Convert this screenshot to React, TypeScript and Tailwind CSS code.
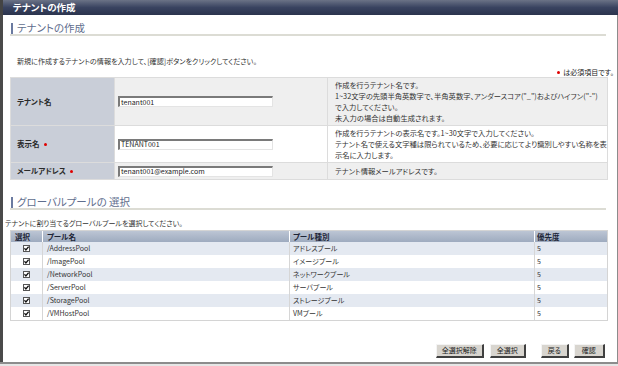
import React from "react";

const pools = [
  { name: "/AddressPool", type: "アドレスプール" },
  { name: "/ImagePool", type: "イメージプール" },
  { name: "/NetworkPool", type: "ネットワークプール" },
  { name: "/ServerPool", type: "サーバプール" },
  { name: "/StoragePool", type: "ストレージプール" },
  { name: "/VMHostPool", type: "VMプール" },
];

function Dot() {
  return <span className="inline-block w-[3px] h-[3px] rounded-full bg-[#e00000] ml-[4px] align-middle" />;
}

function Check() {
  return (
    <span className="w-[7px] h-[7px] border border-[#555] bg-white flex items-center justify-center">
      <svg width="5" height="5" viewBox="0 0 5 5">
        <path d="M0.4 2.3 L1.9 3.9 L4.6 0.7" stroke="#111" strokeWidth="1.3" fill="none" />
      </svg>
    </span>
  );
}

function Heading({ children }: { children: React.ReactNode }) {
  return (
    <div className="flex items-center h-[14px] border-b-2 border-[#dcdcd4] mr-[2px]">
      <span className="w-[2px] h-[11px] bg-[#6a7aa0] ml-px mr-[4px]" />
      <span className="text-[10.5px] leading-[12px] text-[#5f6e8e]">{children}</span>
    </div>
  );
}

function Input({ value }: { value: string }) {
  return (
    <div className="w-[155px] h-[11px] bg-white border-t-2 border-l-2 border-[#7a7a7a] border-r border-b border-r-[#e4e4e4] border-b-[#e4e4e4] flex items-center pl-[1px] text-[7px] text-[#222] leading-none">
      {value}
    </div>
  );
}

function Btn({ label, w }: { label: string; w: string }) {
  return (
    <div className={`${w} h-[14px] bg-[#d8d5cf] border-t border-l border-t-[#f4f4f4] border-l-[#f4f4f4] border-r-2 border-b-2 border-r-[#404040] border-b-[#404040] flex items-center justify-center text-[7px] leading-none text-[#222]`}>
      {label}
    </div>
  );
}

export default function App() {
  return (
    <div className="w-[618px] h-[366px] flex flex-col bg-white overflow-hidden font-['Noto_Sans_CJK_JP',sans-serif] [font-feature-settings:'palt']">
      <div className="h-[15px] shrink-0 bg-linear-to-b from-[#6b7386] via-[#394360] to-[#2b344d] flex items-center pl-[10px] border-l-[3px] border-[#444]">
        <span className="text-white font-bold text-[9.5px] leading-none">テナントの作成</span>
      </div>
      <div className="flex flex-1 min-h-0">
        <div className="w-[3px] bg-[#4a4a4a] shrink-0" />
        <div className="flex-1 flex flex-col pl-[7px] pr-[9px]">
          <div className="mt-[7px]">
            <Heading>テナントの作成</Heading>
          </div>
          <div className="mt-[20px] pl-[7px] text-[7.1px] leading-[10px] text-[#333]">
            新規に作成するテナントの情報を入力して、[確認]ボタンをクリックしてください。
          </div>
          <div className="flex justify-end items-center -mr-[6px] mt-[2px] h-[9px] text-[7px] text-[#222] leading-none">
            <span className="w-[3px] h-[3px] rounded-full bg-[#e00000] mr-[3px]" />
            は必須項目です。
          </div>
          <div className="mt-0 grid grid-cols-[103px_212px_1fr] grid-rows-[47px_36px_16px] gap-px bg-[#dcdcdc] border border-[#dcdcdc] text-[7.3px] text-[#333] whitespace-nowrap">
            <div className="bg-[#c9ced8] flex items-center pl-[6px] font-bold text-[7.5px] text-[#2a2a2a]">テナント名</div>
            <div className="bg-[#efefef] flex items-center pl-[3px]"><Input value="tenant001" /></div>
            <div className="bg-[#efefef] flex flex-col justify-center pl-[7px] leading-[11px]">
              <span>作成を行うテナント名です。</span>
              <span>1~32文字の先頭半角英数字で、半角英数字、アンダースコア("_")およびハイフン("-")</span>
              <span>で入力してください。</span>
              <span>未入力の場合は自動生成されます。</span>
            </div>
            <div className="bg-[#c9ced8] flex items-center pl-[6px] font-bold text-[7.5px] text-[#2a2a2a]">表示名<Dot /></div>
            <div className="bg-white flex items-center pl-[3px]"><Input value="TENANT001" /></div>
            <div className="bg-white flex flex-col justify-center pl-[7px] leading-[11px]">
              <span>作成を行うテナントの表示名です。1~30文字で入力してください。</span>
              <span>テナント名で使える文字種は限られているため、必要に応じてより識別しやすい名称を表</span>
              <span>示名に入力します。</span>
            </div>
            <div className="bg-[#c9ced8] flex items-center pl-[6px] font-bold text-[7.5px] text-[#2a2a2a]">メールアドレス<Dot /></div>
            <div className="bg-[#efefef] flex items-center pl-[3px]"><Input value="tenant001@example.com" /></div>
            <div className="bg-[#efefef] flex items-center pl-[7px]">テナント情報メールアドレスです。</div>
          </div>

          <div className="mt-[16px]">
            <Heading>グローバルプールの 選択</Heading>
          </div>
          <div className="mt-[8px] -ml-[5px] text-[7px] leading-[10px] text-[#333]">
            テナントに割り当てるグローバルプールを選択してください。
          </div>
          <div className="mt-[2px] border border-[#d4d4d4] text-[7px] text-[#333]">
            <div className="grid grid-cols-[32px_247px_245px_1fr] h-[11px] bg-linear-to-b from-[#bcc5d4] to-[#9eabbf] font-bold text-[7.5px] text-[#1c2436]">
              <div className="flex items-center pl-[4px] border-r border-white">選択</div>
              <div className="flex items-center pl-[4px] border-r border-white">プール名</div>
              <div className="flex items-center pl-[3px] border-r border-white">プール種別</div>
              <div className="flex items-center pl-[2px]">優先度</div>
            </div>
            {pools.map((p, i) => (
              <div
                key={p.name}
                className={`grid grid-cols-[32px_247px_245px_1fr] h-[13px] ${i % 2 === 0 ? "bg-[#e4e9f1]" : "bg-white"}`}
              >
                <div className="flex items-center justify-center border-r border-[#d6d6d6]"><Check /></div>
                <div className="flex items-center pl-[4px] border-r border-[#d6d6d6]">{p.name}</div>
                <div className="flex items-center pl-[3px] border-r border-[#d6d6d6]">{p.type}</div>
                <div className="flex items-center pl-[2px]">5</div>
              </div>
            ))}
          </div>

          <div className="mt-auto mb-[4px] flex justify-end pr-[3px]">
            <Btn label="全選択解除" w="w-[48px]" />
            <div className="w-[6px]" />
            <Btn label="全選択" w="w-[36px]" />
            <div className="w-[15px]" />
            <Btn label="戻る" w="w-[28px]" />
            <div className="w-[5px]" />
            <Btn label="確認" w="w-[31px]" />
          </div>
        </div>
        <div className="w-[2px] bg-[#8c8c8c] shrink-0" />
        <div className="w-px bg-[#e6e6e6] shrink-0" />
      </div>
      <div className="h-[2px] bg-[#8c8c8c] shrink-0" />
      <div className="h-[2px] bg-[#e6e6e6] shrink-0" />
    </div>
  );
}
